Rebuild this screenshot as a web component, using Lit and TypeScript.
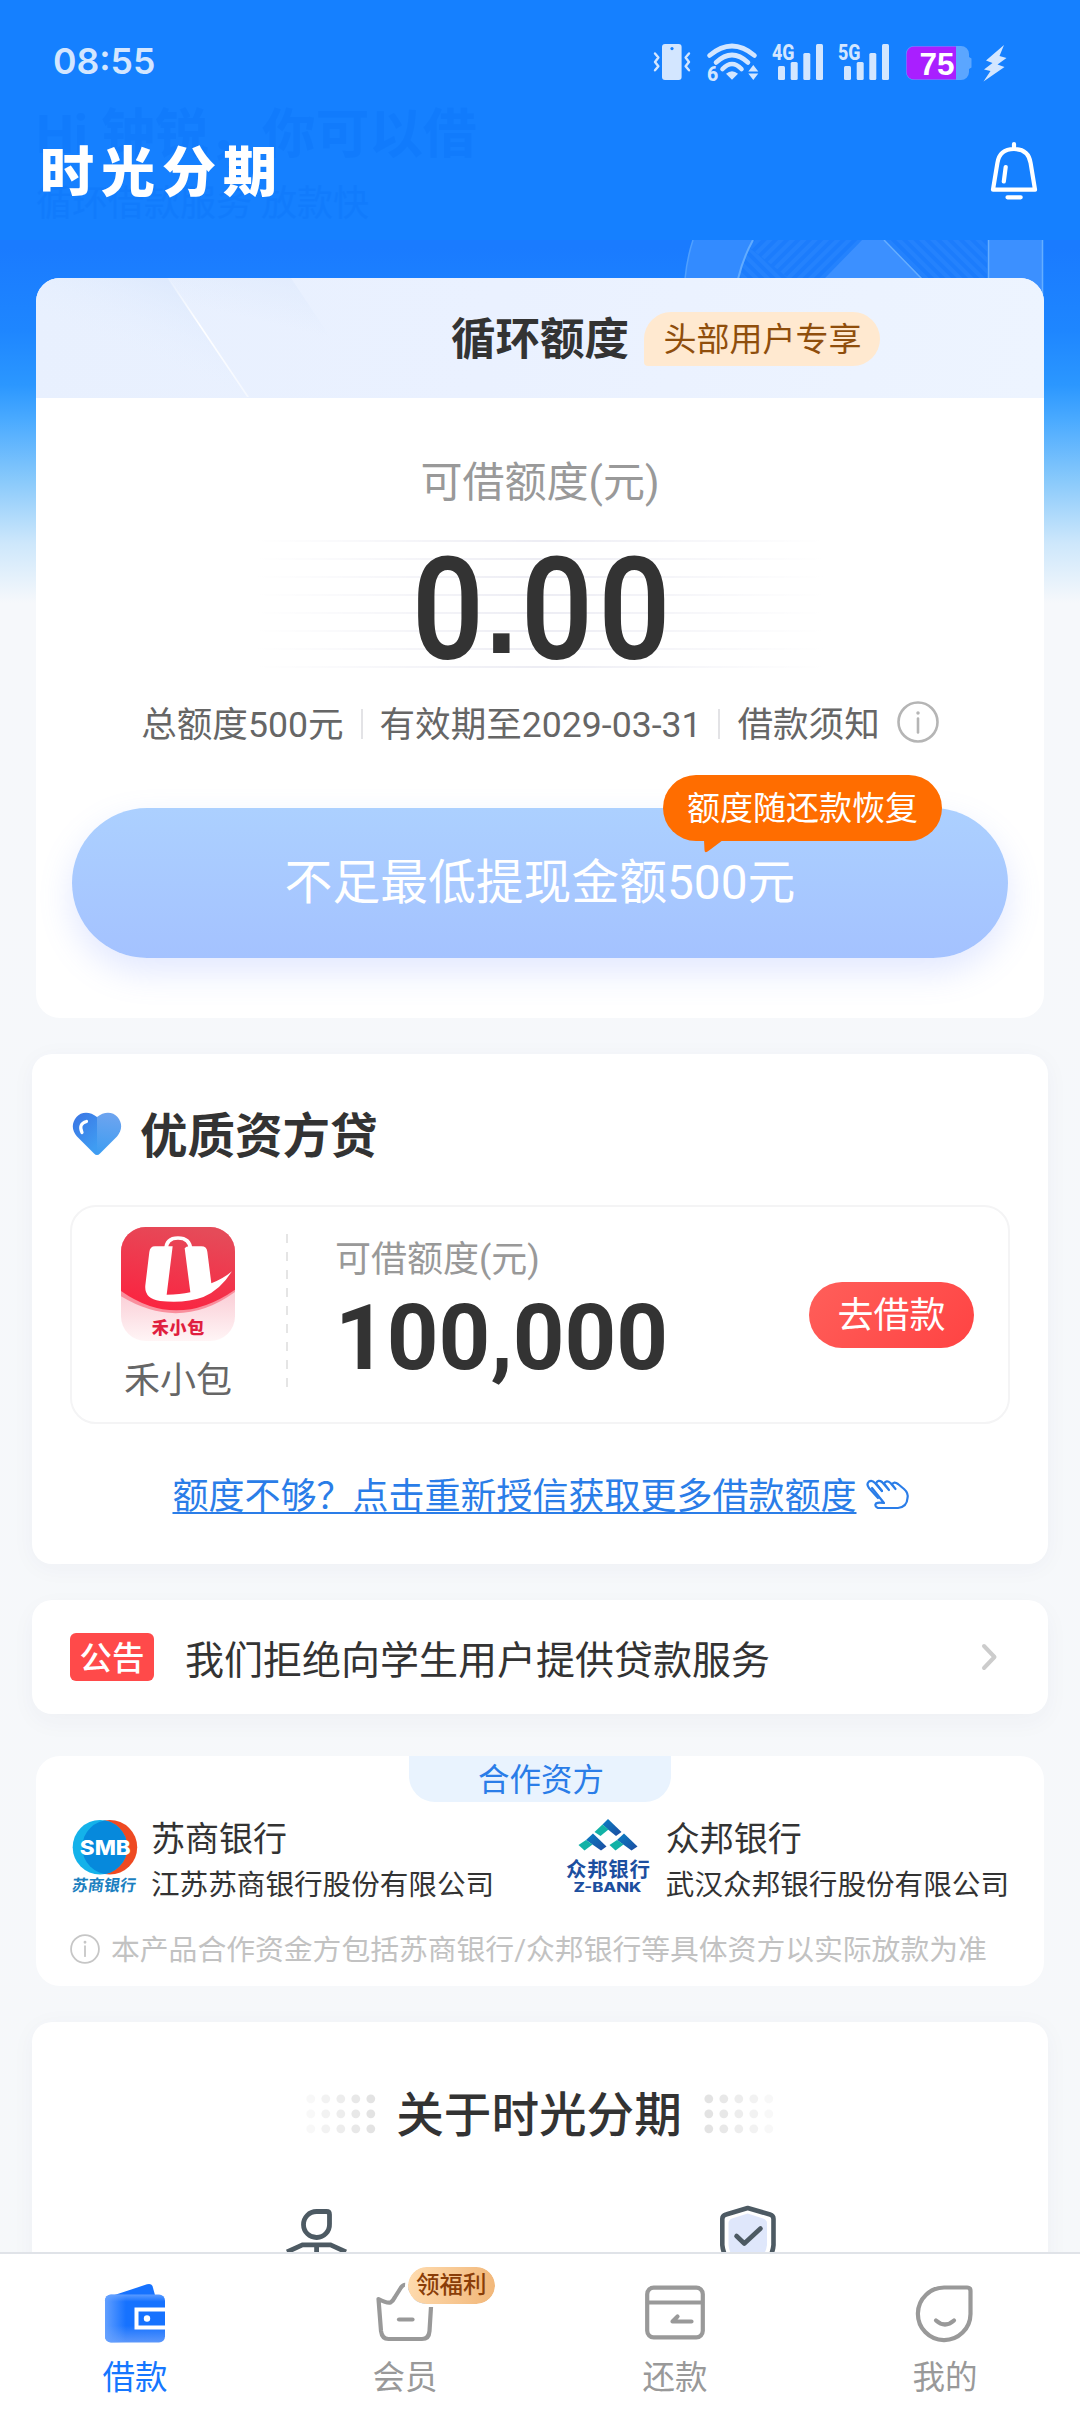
import { LitElement, html, css, svg } from "lit";
import { customElement, property } from "lit/decorators.js";

const base = css`
  *, *::before, *::after { box-sizing: border-box; }
  svg { display: block; flex: none; overflow: visible; }
`;

@customElement("status-bar")
class StatusBar extends LitElement {
  static styles = [base, css`
    :host { display: flex; justify-content: space-between; height: 124px; padding: 0 0 0 53px; color: #d3e6ff; }
    .time { font: 600 35.600px/124px Inter, Roboto, sans-serif; letter-spacing: 0; }
    .t { font-family: Roboto, sans-serif; font-weight: 800; }
  `];

  bars(x: number) {
    return svg`
      <rect x=${x} y="66" width="7" height="14" rx="1.5"/>
      <rect x=${x + 12.7} y="62" width="7" height="18" rx="1.5"/>
      <rect x=${x + 25.3} y="53" width="7" height="27" rx="1.5"/>
      <rect x=${x + 38} y="44" width="7" height="36" rx="1.5"/>`;
  }

  render() {
    return html`
      <div class="time">08:55</div>
      <svg width="440" height="124" viewBox="640 0 440 124" fill="#d3e6ff">
        <rect x="662" y="44" width="19.6" height="36" rx="3"/>
        <circle cx="672" cy="48.6" r="1.6" fill="#1580ff"/>
        <path d="M655 53.5l3.4 4-3.4 4.4 3.4 4.4-3.4 4M689 53.5l-3.4 4 3.4 4.4-3.4 4.4 3.4 4" fill="none" stroke="#d3e6ff" stroke-width="2.4" stroke-linecap="round" stroke-linejoin="round"/>
        <g fill="none" stroke="#d3e6ff" stroke-width="4.600" stroke-linecap="round">
          <path d="M709.5 55.500Q732 36.500 754.500 55.500"/>
          <path d="M716 62.500Q732 47.500 748 62.500"/>
          <path d="M722.5 69Q732 59 741.500 69"/>
        </g>
        <path d="M726 73.800Q732 68.500 738 73.800L732 79.800Z"/>
        <text class="t" x="707" y="80.500" font-size="19.500">6</text>
        <path d="M753.300 65l5 6.500h-10zM753.300 80l5-6.500h-10z"/>
        <text class="t" x="772" y="59.500" font-size="22.500" textLength="22.500" lengthAdjust="spacingAndGlyphs">4G</text>
        ${this.bars(778)}
        <text class="t" x="838" y="59.500" font-size="22.500" textLength="22.500" lengthAdjust="spacingAndGlyphs">5G</text>
        ${this.bars(844)}
        <path d="M914 46h47a8 8 0 0 1 8 8v3l2.500 1.500v9L969 69v3a8 8 0 0 1-8 8h-47a8 8 0 0 1-8-8V54a8 8 0 0 1 8-8z" fill="#5ba6ff"/>
        <path d="M914 46.500h42v33h-42a7.500 7.500 0 0 1-7.500-7.500V54a7.500 7.500 0 0 1 7.500-7.500z" fill="#a91fff"/>
        <text x="937" y="74.500" text-anchor="middle" font-size="31" font-weight="700" font-family="Liberation Sans, sans-serif" fill="#fff" textLength="35" lengthAdjust="spacingAndGlyphs">75</text>
        <path d="M1004 45L986 60.500l6.500 2.500-8.500 6.500 6.500 1.500L983.500 81.500 1004.500 67l-7-2.500 9-6.500-7-2z"/>
      </svg>`;
  }
}

@customElement("brand-bar")
class BrandBar extends LitElement {
  static styles = [base, css`
    :host { display: flex; align-items: flex-start; justify-content: space-between; height: 116px; padding: 0 40px 0 40px; position: relative; }
    .ghost { position: absolute; left: 36px; top: -22px; color: #0f78fa; opacity: .55; white-space: nowrap; }
    .hi { font-weight: 700; font-size: 53.600px; line-height: 66px; }
    .sub { font-size: 36px; line-height: 44px; margin-top: 14px; }
    .logo { position: relative; font-weight: 900; font-size: 54px; letter-spacing: 7px; line-height: 64px; margin-top: 18px; color: #fff; }
    .bell { margin-top: 16px; }
  `];
  render() {
    return html`
      <div class="ghost"><div class="hi">Hi 钟锐，你可以借</div><div class="sub">循环借款服务 放款快</div></div>
      <div class="logo">时光分期</div>
      <svg class="bell" width="52" height="62" viewBox="988 140 52 62" fill="none" stroke="#fff" stroke-width="4.200" stroke-linecap="round" stroke-linejoin="round">
        <path d="M1014 144v4M993 189.700L997.400 163Q999.500 149 1014 149T1030.600 163L1035 189.700Z"/>
        <path d="M1005.700 167l-1.900 14.500M1007.500 197.300h13.200"/>
      </svg>`;
  }
}

@customElement("credit-card")
class CreditCard extends LitElement {
  static styles = [base, css`
    :host { display: block; position: relative; margin: 0 36px; height: 740px; border-radius: 24px; background: #fff; color: #666; }
    .head { position: relative; height: 120px; display: grid; grid-template-columns: 1fr auto 1fr; align-items: center; border-radius: 24px 24px 0 0; overflow: hidden; background: linear-gradient(100deg, #e8f0fe, #eaf1ff 45%, #edf4ff); }
    .shade { position: absolute; left: 0; top: 0; }
    .title { grid-column: 2; font-weight: 700; font-size: 44.500px; line-height: 60px; color: #333; position: relative; top: 2px; }
    .vip { justify-self: start; margin-left: 15px; margin-top: 2px; height: 54px; line-height: 56px; padding: 0 18.500px 0 19.500px; border-radius: 27px 27px 27px 4px; background: #ffe9d0; color: #8f4e0c; font-size: 33px; }
    .caption { margin-top: 54px; height: 60px; line-height: 61px; text-align: center; font-size: 42px; color: #999; }
    .amount { margin: 28px auto 0; width: 566px; height: 128px; display: flex; justify-content: center; align-items: center;
      background: linear-gradient(90deg, #fff, transparent 50%, #fff), repeating-linear-gradient(180deg, #ededf4 0 2px, #fff 2px 18px); }
    .num { font-family: Roboto, sans-serif; font-weight: 600; font-size: 143px; line-height: 128px; letter-spacing: 6.400px; margin-right: -6px; color: #333; white-space: nowrap; transform: translate(1px, 6px) scaleX(.88); }
    .dot { font-family: "Liberation Sans", sans-serif; font-weight: 700; font-size: 132px; line-height: 1px; letter-spacing: 4px; margin-left: -5px; position: relative; top: -6px; }
    .meta { margin-top: 34px; height: 44px; display: flex; justify-content: center; align-items: center; font-size: 35.600px; line-height: 46px; gap: 17px; }
    .meta span { padding-top: 2px; }
    .sep { width: 2px; height: 30px; background: #e3e3e6; }
    .meta svg { margin-top: -4px; }
    .cta { position: relative; margin: 62px 36px 0; height: 150px; border-radius: 75px; background: linear-gradient(180deg, #acd0ff, #a4c2ff); box-shadow: 0 14px 34px rgba(110, 140, 255, .2); color: #fff; text-align: center; font-size: 47.800px; line-height: 151px; }
    .tip { position: absolute; left: 591px; top: -33px; height: 66px; padding: 0 24px; border-radius: 33px; background: #ff6d00; font-size: 33px; line-height: 67px; }
    .tip svg { position: absolute; left: 41px; top: 65px; }
  `];
  render() {
    return html`
      <div class="head">
        <svg class="shade" width="420" height="119" viewBox="36 278 420 119">
          <defs>
            <linearGradient id="a" x1="1" y1="0" x2=".3" y2="1"><stop offset="0" stop-color="#cfe0fb" stop-opacity=".75"/><stop offset=".7" stop-color="#e8f1ff" stop-opacity="0"/></linearGradient>
            <linearGradient id="b" x1="0" y1="0" x2="0" y2="1"><stop offset="0" stop-color="#fff" stop-opacity=".1"/><stop offset=".4" stop-color="#fff"/><stop offset="1" stop-color="#fff" stop-opacity=".5"/></linearGradient>
            <linearGradient id="c" x1="1" y1="0" x2=".6" y2="1"><stop offset="0" stop-color="#dce8fc" stop-opacity=".7"/><stop offset=".5" stop-color="#dce8fc" stop-opacity="0"/></linearGradient>
          </defs>
          <path d="M36 278H168L248 397H36Z" fill="url(#a)"/>
          <path d="M168 278H291L370 397H248Z" fill="url(#c)"/>
          <path d="M167 278L247 397H249L169 278Z" fill="url(#b)"/>
        </svg>
        <div class="title">循环额度</div>
        <div class="vip">头部用户专享</div>
      </div>
      <div class="caption">可借额度(元)</div>
      <div class="amount"><div class="num">0<span class="dot">.</span>00</div></div>
      <div class="meta">
        <span>总额度500元</span><i class="sep"></i><span>有效期至2029-03-31</span><i class="sep"></i><span>借款须知</span>
        <svg width="42" height="42" viewBox="0 0 42 42" fill="none" stroke="#b5b5b5" stroke-width="2.600"><circle cx="21" cy="21" r="19.500"/><path d="M21 17.500v14" stroke-linecap="round"/><circle cx="21" cy="12" r="1" fill="#b5b5b5" stroke-width="1.500"/></svg>
      </div>
      <div class="cta">不足最低提现金额500元
        <div class="tip">额度随还款恢复<svg width="20" height="13"><path d="M0 0H19L5 10.500Q.5 14 .5 10Z" fill="#ff6d00"/></svg></div>
      </div>`;
  }
}

@customElement("partner-loan")
class PartnerLoan extends LitElement {
  static styles = [base, css`
    :host { display: block; margin: 36px 32px 0; height: 510px; border-radius: 20px; background: #fff; box-shadow: 0 4px 24px rgba(40, 60, 100, .04); padding: 0 38px; }
    .title { display: flex; align-items: center; gap: 18px; padding: 54px 0 0 2px; height: 112px; font-weight: 700; font-size: 47.500px; line-height: 58px; color: #333; }
    .title svg { margin-top: -7px; }
    .offer { margin-top: 39px; height: 219px; border: 2px solid #f4f4f5; border-radius: 26px; display: flex; align-items: stretch; padding-right: 34px; }
    .brand { width: 214px; padding: 20px 0 0 0; display: flex; flex-direction: column; align-items: center; font-size: 36px; line-height: 44px; color: #666; }
    .brand svg, .brand span { margin-left: -2px; }
    .brand span { margin-top: 18px; }
    .dash { margin-top: 27px; width: 2px; height: 156px; background: repeating-linear-gradient(180deg, #e5e5e5 0 9px, #fff 9px 18px); }
    .body { flex: 1; padding-left: 47px; }
    .cap { margin-top: 31px; font-size: 36px; line-height: 44px; color: #999; }
    .big { font: 700 90.300px/90px Roboto, sans-serif; color: #333; margin-top: 11px; }
    .go { align-self: center; margin-top: 1px; width: 165px; height: 66px; border-radius: 33px; background: linear-gradient(135deg, #ff5f5a, #ff4343); color: #fff; text-align: center; font-size: 36px; line-height: 68px; }
    .more { margin-top: 48px; display: flex; justify-content: center; align-items: center; gap: 9px; padding-left: 1px; font-size: 36px; line-height: 50px; color: #2a7de8; }
    .more span { text-decoration: underline; text-decoration-thickness: 2px; text-underline-offset: 3px; }
    .more svg { margin-top: -6px; }
    .lg { font-family: "Noto Sans CJK SC", sans-serif; font-weight: 900; }
  `];
  render() {
    return html`
      <div class="title">
        <svg width="50" height="44" viewBox="0 0 50 44">
          <defs><linearGradient id="l" x1="0" y1="0" x2=".6" y2="1"><stop offset="0" stop-color="#3b74e4"/><stop offset="1" stop-color="#3f9cf2"/></linearGradient>
          <linearGradient id="r" x1=".4" y1="0" x2=".3" y2="1"><stop offset="0" stop-color="#6ea4ef"/><stop offset="1" stop-color="#3d9df2"/></linearGradient></defs>
          <path d="M25 5C18-1 9-.5 4.500 5-.5 11-.5 18 5 24.500L22 41.500Q23.500 43 25 43Z" fill="url(#l)"/>
          <path d="M25 5C32-1 41-.5 45.500 5 50.500 11 50.500 18 45 24.500L28 41.500Q26.500 43 25 43Z" fill="url(#r)"/>
          <path d="M14.500 9.500Q6 12 10 20.500" fill="none" stroke="#fff" stroke-width="3.200" stroke-linecap="round"/>
        </svg>优质资方贷
      </div>
      <div class="offer">
        <div class="brand">
          <svg width="114" height="114" viewBox="183 380 342 342">
            <defs>
              <clipPath id="k"><rect x="183" y="380" width="342" height="342" rx="74"/></clipPath>
              <linearGradient id="p" x1="0" y1="0" x2="0" y2="1"><stop offset=".6" stop-color="#fbd0d8"/><stop offset="1" stop-color="#fff5f6"/></linearGradient>
              <linearGradient id="q" x1=".6" y1="0" x2=".3" y2="1"><stop offset="0" stop-color="#e54b59"/><stop offset="1" stop-color="#fb2340"/></linearGradient>
            </defs>
            <g clip-path="url(#k)">
              <rect x="183" y="380" width="342" height="342" fill="url(#p)"/>
              <path d="M183 380H525V575Q360 695 183 588Z" fill="#f98f9d"/>
              <path d="M183 380H525V568Q350 690 183 572Z" fill="url(#q)"/>
            </g>
            <path d="M318 448Q318 413 354 413T392 448" fill="none" stroke="#fff" stroke-width="11"/>
            <path d="M285 438H338L320 583Q360 583 391 576L374 444Q378 438 388 438H424Q440 438 442 454L454 549Q490 535 516 513Q480 570 430 590Q375 610 300 602Q252 595 256 555L268 455Q270 438 285 438Z" fill="#fff"/>
            <text class="lg" x="354" y="700" text-anchor="middle" font-size="51" fill="#e01f3f" textLength="158">禾小包</text>
          </svg>
          <span>禾小包</span>
        </div>
        <div class="dash"></div>
        <div class="body"><div class="cap">可借额度(元)</div><div class="big">100,000</div></div>
        <div class="go">去借款</div>
      </div>
      <div class="more"><span>额度不够？点击重新授信获取更多借款额度</span>
        <svg width="43" height="31" viewBox="0 0 43 31" fill="none" stroke="#2a7de8" stroke-width="2.200" stroke-linecap="round" stroke-linejoin="round">
          <path d="M12 19L3 9Q0 5 3 2.500 6 .5 9 4L16 12"/>
          <path d="M16 12L10 4.500Q12 0 16 3L23 11L18 4.500Q20.500 .5 24.500 4L29.500 10L26 5.500Q28 2 32 5L38 10Q42.500 14 41.500 19 41 28 32 29H12Q8 27 10 24.500 12 23 18 24L6 9"/>
        </svg>
      </div>`;
  }
}

@customElement("notice-row")
class NoticeRow extends LitElement {
  static styles = [base, css`
    :host { display: flex; align-items: center; margin: 36px 32px 0; height: 114px; border-radius: 20px; background: #fff; box-shadow: 0 8px 24px rgba(40, 60, 100, .04); padding: 0 50px 0 38px; font-size: 39px; color: #333; }
    .tag { width: 84px; height: 48px; border-radius: 6px; background: #ff4a4a; color: #fff; font-weight: 500; font-size: 32.500px; line-height: 52px; text-align: center; }
    .msg { flex: 1; margin-left: 31px; line-height: 50px; padding-top: 7px; }
  `];
  render() {
    return html`<div class="tag">公告</div><div class="msg">我们拒绝向学生用户提供贷款服务</div>
      <svg width="18" height="28" viewBox="0 0 18 28" fill="none" stroke="#ccc" stroke-width="4" stroke-linecap="round" stroke-linejoin="round"><path d="M4 3L14.500 14 4 25"/></svg>`;
  }
}

@customElement("bank-partners")
class BankPartners extends LitElement {
  static styles = [base, css`
    :host { display: block; margin: 42px 36px 0; height: 230px; border-radius: 24px; background: #fff; color: #333; }
    .tab { width: 262px; height: 46px; margin: 0 auto; border-radius: 0 0 26px 26px; background: #e9f3fe; color: #2a7de8; text-align: center; font-size: 31.500px; line-height: 49px; padding-left: 2px; }
    .banks { display: flex; justify-content: space-between; padding: 14px 35px 0 34px; height: 103px; }
    .bank { display: flex; }
    .first { gap: 12px; } .second { gap: 15px; }
    .name { font-size: 34px; line-height: 46px; }
    .full { font-size: 28.600px; line-height: 46px; }
    .note { display: flex; align-items: center; gap: 11px; height: 30px; margin: 29px 0 0 34px; font-size: 28.800px; color: #c2c2c2; line-height: 32px; }
    .note span { padding-top: 2px; }
    .smb { font-family: Inter, sans-serif; font-weight: 800; }
    .cn { font-family: "Noto Sans CJK SC", sans-serif; font-weight: 700; }
  `];
  render() {
    return html`
      <div class="tab">合作资方</div>
      <div class="banks">
        <div class="bank first">
          <svg width="69" height="84" viewBox="70 1816 69 84">
            <defs><clipPath id="e"><ellipse cx="100" cy="1847.300" rx="27.300" ry="27.300"/></clipPath></defs>
            <ellipse cx="109.700" cy="1847.300" rx="27.500" ry="27.300" fill="#ee4a22"/>
            <ellipse cx="100" cy="1847.300" rx="27.300" ry="27.300" fill="#14b2ea"/>
            <ellipse cx="109.700" cy="1847.300" rx="27.500" ry="27.300" fill="#0689dc" clip-path="url(#e)"/>
            <text class="smb" x="105.300" y="1854.500" text-anchor="middle" font-size="20" fill="#fff" textLength="51" lengthAdjust="spacingAndGlyphs">SMB</text>
            <text class="cn" x="72" y="1891.500" font-size="16" font-weight="500" fill="#1b7fc0" textLength="64" transform="translate(265 0) skewX(-8)">苏商银行</text>
          </svg>
          <div><div class="name">苏商银行</div><div class="full">江苏苏商银行股份有限公司</div></div>
        </div>
        <div class="bank second">
          <svg width="86" height="84" viewBox="565 1816 86 84">
            <defs>
              <linearGradient id="g1" x1="0" y1="0" x2="1" y2="1"><stop offset="0" stop-color="#0a7fc4"/><stop offset="1" stop-color="#1d4ba0"/></linearGradient>
            </defs>
            <path d="M608 1819L621.500 1832 616 1836 608 1829.500 602.500 1824.500Z" fill="url(#g1)"/>
            <path d="M602.500 1824.500L608.500 1829.500 600.500 1836 594.500 1832Z" fill="#12b2a6"/>
            <path d="M586 1840L593 1833.500 606.500 1846.500 601 1850.500Z" fill="url(#g1)"/>
            <path d="M586 1840L592.500 1844.500 584.500 1850.500 578.500 1845Z" fill="#12b2a6"/>
            <path d="M617 1840L624 1833.500 637.500 1846.500 631.500 1850.500Z" fill="url(#g1)"/>
            <path d="M617 1840L623.500 1844.500 615.500 1850.500 609.500 1845Z" fill="#12b2a6"/>
            <text class="cn" x="566" y="1876.500" font-size="20.500" fill="#1c4f9f" textLength="84">众邦银行</text>
            <text class="smb" x="573.500" y="1892" font-size="12.500" fill="#1c4f9f" textLength="68" lengthAdjust="spacingAndGlyphs">Z-BANK</text>
          </svg>
          <div><div class="name">众邦银行</div><div class="full">武汉众邦银行股份有限公司</div></div>
        </div>
      </div>
      <div class="note">
        <svg width="30" height="30" viewBox="0 0 42 42" fill="none" stroke="#c6c6c6" stroke-width="2.500"><circle cx="21" cy="21" r="19.500"/><path d="M21 17v14" stroke-linecap="round"/><circle cx="21" cy="11.500" r="1" stroke-width="2"/></svg>
        <span>本产品合作资金方包括苏商银行/众邦银行等具体资方以实际放款为准</span>
      </div>`;
  }
}

@customElement("about-card")
class AboutCard extends LitElement {
  static styles = [base, css`
    :host { display: block; margin: 36px 32px 0; height: 600px; flex: none; border-radius: 20px; background: #fff; box-shadow: 0 4px 24px rgba(40, 60, 100, .04); color: #333; }
    .title { display: flex; justify-content: center; align-items: center; gap: 21px; padding-top: 62px; font-weight: 500; font-size: 47.600px; line-height: 60px; }
    .title span { position: relative; top: 2px; left: -1px; }
    .feats { display: grid; grid-template-columns: 1fr 1fr; padding: 60px 84px 0 68px; justify-items: center; }
  `];
  dots(flip: boolean) {
    const cells = [];
    for (let c = 0; c < 5; c++)
      for (let r = 0; r < 3; r++)
        cells.push(svg`<circle cx=${4.8 + c * 15} cy=${4.8 + r * 15} r="4.400" opacity=${0.25 + (flip ? 4 - c : c) * 0.18}/>`);
    return html`<svg width="70" height="40" fill="#e2e2e2">${cells}</svg>`;
  }
  render() {
    return html`
      <div class="title">${this.dots(false)}<span>关于时光分期</span>${this.dots(true)}</div>
      <div class="feats">
        <svg width="76" height="76" viewBox="278 2204 76 76" fill="none" stroke="#4d5a63" stroke-width="4.800" stroke-linejoin="round">
          <path d="M316.500 2211.500H326.500Q329.500 2211.500 329.500 2214.500V2224A13 13 0 1 1 316.500 2211.500Z"/>
          <path d="M287 2252L302.500 2244.800H330.500L346 2252M316.600 2245v20" stroke-linejoin="miter"/>
        </svg>
        <svg width="60" height="76" viewBox="717 2204 60 76" fill="none" stroke="#4d5a63" stroke-width="4.600" stroke-linejoin="round" stroke-linecap="round">
          <path d="M746.700 2213.500L762 2218.500Q766 2220 766 2223V2245Q764 2260 746.700 2268Q729 2260 727.500 2245V2223Q727.500 2220 731 2218.500Z" fill="#dfe7fb" stroke="none"/>
          <path d="M746.700 2208L769 2214.500Q772.500 2215.500 772.500 2219V2245Q771 2264 746.700 2274Q723 2264 721.300 2245V2219Q721.300 2215.500 725 2214.500Z"/>
          <path d="M735.500 2236L743.300 2243.500 759.500 2228.500"/>
        </svg>
      </div>`;
  }
}

@customElement("tab-item")
class TabItem extends LitElement {
  @property() kind = "";
  @property() label = "";
  @property() badge = "";
  @property({ type: Boolean, reflect: true }) active = false;

  static styles = [base, css`
    :host { position: relative; flex: 1; display: flex; flex-direction: column; align-items: center; padding-top: 26px; color: #999; font-size: 32.500px; line-height: 40px; }
    :host([active]) { color: #1677ff; }
    .label { margin-top: 12px; }
    .badge { position: absolute; left: 135px; top: 10px; height: 43px; padding: 0 8px; border: 3px solid #fff; border-radius: 22px; background: linear-gradient(100deg, #ffdcb0, #f1b678) padding-box; color: #8a3d08; font-weight: 500; font-size: 23.500px; line-height: 37px; white-space: nowrap; }
  `];

  icon() {
    switch (this.kind) {
      case "wallet":
        return svg`
          <defs>
            <linearGradient id="w" x1="0" y1="0" x2="0" y2="1"><stop offset="0" stop-color="#5b9bff"/><stop offset=".15" stop-color="#1672ff"/><stop offset=".65" stop-color="#1672ff"/><stop offset="1" stop-color="#5c97fb"/></linearGradient>
            <linearGradient id="v" x1="0" y1="0" x2="1" y2="0"><stop offset="0" stop-color="#6aa4ff" stop-opacity=".9"/><stop offset=".35" stop-color="#6aa4ff" stop-opacity="0"/></linearGradient>
          </defs>
          <path d="M8 12.500L42 1.300Q46 0 47.500 3L50.500 14H8Z" fill="#1672ff"/>
          <rect x="0" y="11.500" width="60" height="48" rx="6" fill="url(#w)"/>
          <rect x="0" y="11.500" width="60" height="48" rx="6" fill="url(#v)"/>
          <path d="M60 26.500H31.500V44.500H60" fill="none" stroke="#fff" stroke-width="4"/>
          <circle cx="42" cy="35.500" r="3.200" fill="#fff"/>`;
      case "crown":
        return svg`<g fill="none" stroke="#999" stroke-width="4.200" stroke-linecap="round" stroke-linejoin="round">
          <path d="M3.500 16Q12 20.500 15.500 19.500 18 18 20 14L26 4.500Q30-1 34 4.500L40 14Q43 20 46 19.500 49 20 56.500 16L54.500 48Q54 56 47 56H13.500Q7 56 6 48Z"/>
          <path d="M24 36.500h13.500"/></g>`;
      case "card":
        return svg`<g fill="none" stroke="#999" stroke-width="4.200" stroke-linecap="round" stroke-linejoin="round">
          <rect x="2.200" y="4.700" width="55.600" height="49.600" rx="6.500"/><path d="M3 19.500H57"/><path d="M46.500 38.500H27.500L32.500 33.500"/></g>`;
      default:
        return svg`<g fill="none" stroke="#999" stroke-width="4.200" stroke-linecap="round" stroke-linejoin="round">
          <path d="M30 4.500H52Q55.500 4.500 55.500 8V31A26.300 26.300 0 1 1 30 4.500Z"/>
          <path d="M21 37.500Q30 45.500 39 37.500"/></g>`;
    }
  }

  render() {
    return html`
      <svg width="60" height="66" viewBox="0 -3 60 66">${this.icon()}</svg>
      <div class="label">${this.label}</div>
      ${this.badge ? html`<div class="badge">${this.badge}</div>` : ""}`;
  }
}

@customElement("app-root")
class AppRoot extends LitElement {
  static styles = [base, css`
    :host {
      display: flex; flex-direction: column; width: 1080px; height: 2412px; overflow: hidden; position: relative;
      font-family: Roboto, "Noto Sans CJK SC", sans-serif;
      background: linear-gradient(180deg, #1a7bff 0, #1a7bff 248px, #1e86ff 330px, #2b97ff 385px, #4aaaff 420px, #88c9fb 480px, #cde7fb 543px, #f6f8fb 603px, #f6f8fa 100%);
    }
    header { flex: none; height: 240px; background: #1580ff; }
    main { position: relative; flex: 1; min-height: 0; overflow: hidden; padding-top: 38px; display: flex; flex-direction: column; }
    main > * { flex: none; }
    .deco { position: absolute; left: 680px; top: 0; }
    nav { flex: none; height: 160px; display: flex; background: #fff; border-top: 2px solid #e0e3e8; }
  `];

  render() {
    return html`
      <header><status-bar></status-bar><brand-bar></brand-bar></header>
      <main>
        <svg class="deco" width="400" height="60" viewBox="680 240 400 60">
          <defs>
            <pattern id="s" width="8" height="8" patternUnits="userSpaceOnUse" patternTransform="rotate(45)"><rect width="4" height="8" fill="#2f8bff" opacity=".4"/></pattern>
            <pattern id="z" width="8" height="8" patternUnits="userSpaceOnUse" patternTransform="rotate(-45)"><rect width="4" height="8" fill="#2f8bff" opacity=".4"/></pattern>
          </defs>
          <path d="M753 240H987V279H738Z" fill="#1c7cfc"/>
          <path d="M753 240H862L824 279H790L749 247Z" fill="url(#s)"/>
          <path d="M748 247L790 279H738ZM884 240H987V279H922Z" fill="url(#z)"/>
          <path d="M693 240H753Q743 258 738 279H685Q687 258 693 240Z" fill="#338bff"/>
          <path d="M693 240Q687 258 685 279" fill="none" stroke="#4fa0ff" stroke-width="1.500"/>
          <path d="M753 240Q743 258 738 279" fill="none" stroke="#62acff" stroke-width="2"/>
          <path d="M862 240H884L922 279H824Z" fill="#3c90ff"/>
          <path d="M884 240L922 279" stroke="#66aeff" stroke-width="1.500"/>
          <path d="M988 240H1043V300H988Z" fill="#3c90ff"/>
          <path d="M988.500 240V300M1042.500 240V300" stroke="#66aeff" stroke-width="1.500"/>
        </svg>
        <credit-card></credit-card>
        <partner-loan></partner-loan>
        <notice-row></notice-row>
        <bank-partners></bank-partners>
        <about-card></about-card>
      </main>
      <nav>
        <tab-item kind="wallet" label="借款" active></tab-item>
        <tab-item kind="crown" label="会员" badge="领福利"></tab-item>
        <tab-item kind="card" label="还款"></tab-item>
        <tab-item kind="face" label="我的"></tab-item>
      </nav>`;
  }
}
